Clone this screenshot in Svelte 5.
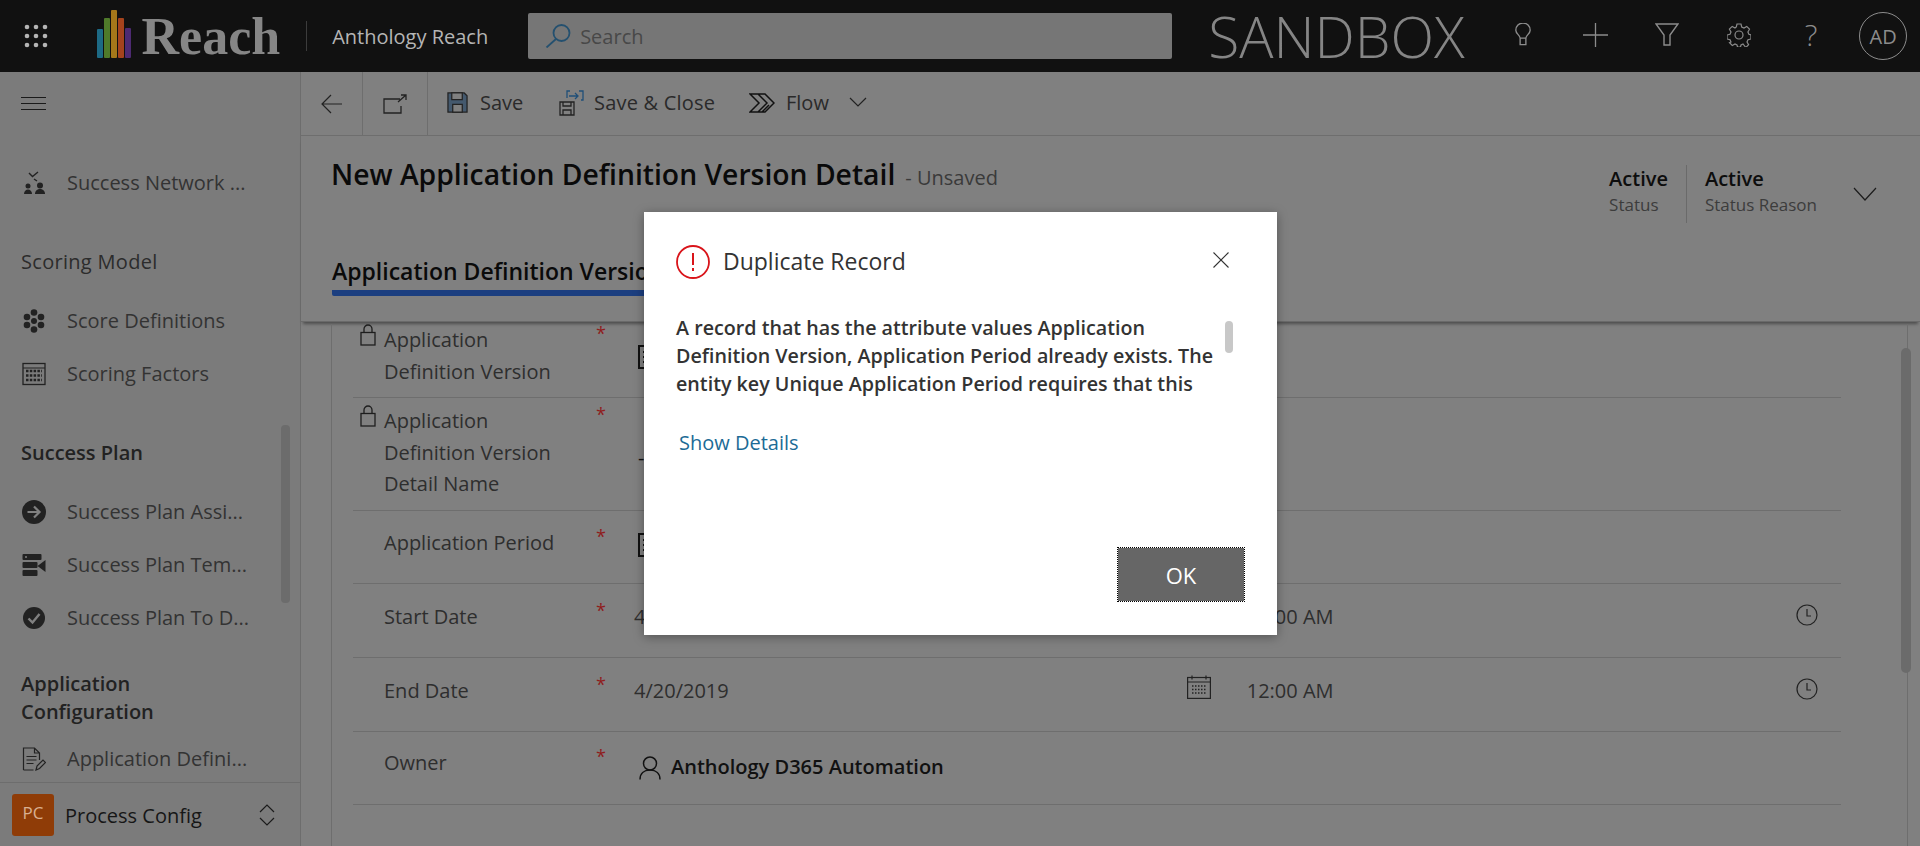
<script>
  const navGroups = [
    { heading: null, items: [{ label: 'Success Network ...', icon: 'network' }] },
    { heading: ['Scoring Model'], light: true, items: [
      { label: 'Score Definitions', icon: 'flower' },
      { label: 'Scoring Factors', icon: 'abacus' }
    ] },
    { heading: ['Success Plan'], items: [
      { label: 'Success Plan Assi...', icon: 'arrow' },
      { label: 'Success Plan Tem...', icon: 'template' },
      { label: 'Success Plan To D...', icon: 'check' }
    ] },
    { heading: ['Application', 'Configuration'], tall: true, items: [
      { label: 'Application Defini...', icon: 'doc' }
    ] }
  ];

  const bars = [
    { h: 29, c: '#1d6a85' },
    { h: 40, c: '#4f7a2a' },
    { h: 48, c: '#a5781a' },
    { h: 40, c: '#a4431d' },
    { h: 30, c: '#4d2a72' }
  ];
</script>

{#snippet navIcon(name)}
  <svg class="nav-icon" viewBox="0 0 24 24" fill="#222" stroke="none">
    {#if name === 'network'}
      <path d="M7 2l3.500 3.500L16 1M12 8l3 2" fill="none" stroke="#222" stroke-width="1.400"/>
      <circle cx="6" cy="15" r="2.500"/><path d="M2 23c0-3 2-4.500 4-4.500s4 1.500 4 4.500z"/>
      <circle cx="18" cy="14.500" r="3"/><path d="M13 23c0-3.500 2.500-5 5-5s5 1.500 5 5z"/>
    {:else if name === 'flower'}
      <circle cx="12" cy="3.500" r="3.300"/><circle cx="5" cy="8" r="3.300"/><circle cx="19" cy="8" r="3.300"/>
      <circle cx="12" cy="12" r="3"/><circle cx="5" cy="16" r="3.300"/><circle cx="19" cy="16" r="3.300"/><circle cx="12" cy="20.500" r="3.300"/>
    {:else if name === 'abacus'}
      <rect x="1" y="1.500" width="22" height="21" fill="none" stroke="#222" stroke-width="1.300"/>
      <path d="M1 6h22" stroke="#222" stroke-width="1"/>
      <path d="M4 9h16M4 13.500h16M4 18h16" stroke="#222" stroke-width="2.600" stroke-dasharray="2.500 1.300" fill="none"/>
    {:else if name === 'arrow'}
      <circle cx="12" cy="12" r="12"/>
      <path d="M5.500 12h11M12 6.500l5.500 5.500-5.500 5.500" fill="none" stroke="#808080" stroke-width="2.200"/>
    {:else if name === 'template'}
      <rect x="0.500" y="1" width="19" height="6" rx="1"/><rect x="0.500" y="9" width="15" height="6" rx="1"/><rect x="0.500" y="17" width="15" height="6" rx="1"/>
      <path d="M23.500 7v12l-8-6z"/>
      <circle cx="4" cy="4" r="1" fill="#808080"/>
    {:else if name === 'check'}
      <circle cx="12" cy="12" r="11"/>
      <path d="M6.500 12.500l4 4 7-8.500" fill="none" stroke="#808080" stroke-width="2.400"/>
    {:else if name === 'doc'}
      <path d="M1.500 23V1h11l5 5v7M1.500 23h10M12.500 1v5h5" fill="none" stroke="#222" stroke-width="1.200"/>
      <path d="M4.500 9.500h10M4.500 13h10M4.500 16.500h7" stroke="#222" stroke-width="1.200"/>
      <path d="M14 23l1-4 6-6 2.500 2.500-6 6z" fill="none" stroke="#222" stroke-width="1.200"/>
    {/if}
  </svg>
{/snippet}

{#snippet lock()}
  <svg class="lock" viewBox="0 0 16 22" fill="none" stroke="#1e1e1e" stroke-width="1.300">
    <rect x="1" y="8.500" width="14" height="12.500"/>
    <path d="M4 8.500V5a4 4 0 0 1 8 0v3.500"/>
  </svg>
{/snippet}

{#snippet calendar()}
  <svg class="calendar" viewBox="0 0 24 24" fill="none" stroke="#222" stroke-width="1.200">
    <rect x="0.600" y="2.500" width="22.800" height="20.900"/>
    <path d="M0.600 7h22.800M5 0.500v4M19 0.500v4"/>
    <path d="M5 11h14M5 14.500h14M5 18h14" stroke-width="1.600" stroke-dasharray="1.500 1.500"/>
  </svg>
{/snippet}

{#snippet clock()}
  <svg class="clock" viewBox="0 0 22 22" fill="none" stroke="#222" stroke-width="1.200">
    <circle cx="11" cy="11" r="10"/>
    <path d="M11 5v7h4"/>
  </svg>
{/snippet}

{#snippet lookup()}
  <svg viewBox="0 0 24 24" width="24" height="24" fill="none" stroke="#111" stroke-width="2">
    <rect x="1" y="1" width="22" height="22"/>
    <path d="M5 7h14M5 12h14M5 17h14" stroke-width="1.800"/>
  </svg>
{/snippet}

<div class="page">
  <header class="topbar">
    <svg class="waffle" viewBox="0 0 24 24" fill="#b4b4b4">
      {#each [3, 12, 21] as y}
        {#each [3, 12, 21] as x}
          <circle cx={x} cy={y} r="2.300"/>
        {/each}
      {/each}
    </svg>
    <div class="logo-bars">
      {#each bars as b}
        <span style="height: {b.h}px; background: {b.c}"></span>
      {/each}
    </div>
    <span class="logo-word">Reach</span>
    <span class="logo-sep"></span>
    <span class="app-name">Anthology Reach</span>
    <div class="search">
      <svg viewBox="0 0 26 24" fill="none" stroke="#24506f" stroke-width="1.800">
        <circle cx="16.500" cy="9" r="8"/>
        <path d="M11 15L1.500 23.500"/>
      </svg>
      <span>Search</span>
    </div>
    <span class="sandbox">SANDBOX</span>
    <div class="top-icons">
      <span class="top-icon">
        <svg width="18" height="23" viewBox="0 0 24 32" fill="none" stroke="#8c8c8c" stroke-width="1.900">
          <path d="M8 21c0-4-6-6-6-11a10 10 0 0 1 20 0c0 5-6 7-6 11zM8 21v9h8v-9"/>
        </svg>
      </span>
      <span class="top-icon">
        <svg width="25" height="24" viewBox="0 0 25 24" fill="none" stroke="#8c8c8c" stroke-width="1.300">
          <path d="M12.500 0v24M0 12h25"/>
        </svg>
      </span>
      <span class="top-icon">
        <svg width="24" height="23" viewBox="0 0 24 23" fill="none" stroke="#8c8c8c" stroke-width="1.400">
          <path d="M1 1h22L15 12v10H9V12z"/>
        </svg>
      </span>
      <span class="top-icon">
        <svg width="24" height="24" viewBox="0 0 24 24" fill="none" stroke="#8c8c8c" stroke-width="1.200">
          <circle cx="12" cy="12" r="4"/>
          <path d="M10 1h4l.7 3 2.300 1 2.700-1.600 2.800 2.800L20.900 9l1 2.300 2.100.7v4l-3 .7-1 2.300 1.600 2.700-2.800 2.800L16 21l-2 1-.5 2h-3l-.5-2-2-1-2.700 1.500-2.800-2.800L4 19l-1-2.300-3-.7v-4l3-.7L4 9 2.400 6.200l2.800-2.800L8 5l1.300-1z"/>
        </svg>
      </span>
      <span class="top-icon help">?</span>
    </div>
    <span class="avatar">AD</span>
  </header>

  <div class="body">
    <aside class="sidebar">
      <div class="hamburger"><span></span><span></span><span></span></div>
      <nav class="nav">
        {#each navGroups as group}
          {#if group.heading}
            <div class="heading" class:light={group.light} class:tall={group.tall}>
              {#each group.heading as line}
                <div>{line}</div>
              {/each}
            </div>
          {/if}
          {#each group.items as item}
            <div class="nav-item">
              {@render navIcon(item.icon)}
              <span>{item.label}</span>
            </div>
          {/each}
        {/each}
      </nav>
      <div class="area">
        <span class="area-badge">PC</span>
        <span class="area-name">Process Config</span>
        <svg viewBox="0 0 16 24" fill="none" stroke="#1c1c1c" stroke-width="1.200">
          <path d="M1 9l7-7 7 7M1 15l7 7 7-7"/>
        </svg>
      </div>
      <div class="side-thumb"></div>
    </aside>

    <main class="main">
      <div class="commandbar">
        <button class="cmd narrow back" aria-label="Back">
          <svg viewBox="0 0 22 20" width="22" height="20" fill="none" stroke="#222" stroke-width="1.200"><path d="M21 10H1M10 1l-9 9 9 9"/></svg>
        </button>
        <button class="cmd narrow pop" aria-label="Open in new window">
          <svg viewBox="0 0 24 20" width="24" height="20" fill="none" stroke="#222" stroke-width="1.300"><path d="M17 5H1v14h17v-7M15 8l8-7M18 1h5v5"/></svg>
        </button>
        <button class="cmd save">
          <svg viewBox="0 0 22 22" width="21" height="21" stroke="#222" stroke-width="1.300"><path d="M1 1h17l3 3v17H1z" fill="#44596e"/><path d="M5 1h11v7H5z" fill="#808080"/><path d="M6 21v-8h10v8z" fill="#808080"/></svg>
          <span>Save</span>
        </button>
        <button class="cmd saveclose">
          <svg viewBox="0 0 25 26" width="25" height="26" fill="none" stroke="#222" stroke-width="1.300"><path d="M1 12h14v13H1zM4 12v4h8v-4M4 25v-5h8v5" /><path d="M8 8V1h3M20 1h4v9h-2M10 6h9M16 3l3 3-3 3" stroke="#1f4f78"/></svg>
          <span>Save &amp; Close</span>
        </button>
        <button class="cmd flow">
          <svg viewBox="0 0 26 20" width="26" height="20" fill="none" stroke="#111" stroke-width="1.500"><path d="M1 1h15l9 9-9 9H1l9-9zM9 1l9 9-9 9M13 19l7-7"/></svg>
          <span>Flow</span>
          <svg class="flow-chev" viewBox="0 0 18 10" width="18" height="10" fill="none" stroke="#222" stroke-width="1.200"><path d="M1 1l8 8 8-8"/></svg>
        </button>
      </div>

      <section class="formhead">
        <div class="titlerow">
          <div class="title">
            <h1>New Application Definition Version Detail</h1>
            <span class="unsaved">- Unsaved</span>
          </div>
          <div class="status">
            <div class="stat first"><b>Active</b><small>Status</small></div>
            <div class="stat"><b>Active</b><small>Status Reason</small></div>
            <svg viewBox="0 0 24 14" width="24" height="14" fill="none" stroke="#1c1c1c" stroke-width="1.200"><path d="M1 1l11 12L23 1"/></svg>
          </div>
        </div>
        <div class="tab">Application Definition Version Detail</div>
      </section>

      <div class="formbody">
        <div class="card">
          <div class="row r1">
            <span class="lockcell">{@render lock()}</span>
            <div class="label"><div>Application</div><div>Definition Version</div></div>
            <span class="star">*</span>
            <div class="value icon-value">{@render lookup()}</div>
          </div>
          <div class="row r2">
            <span class="lockcell">{@render lock()}</span>
            <div class="label"><div>Application</div><div>Definition Version</div><div>Detail Name</div></div>
            <span class="star">*</span>
            <div class="value dash">-</div>
          </div>
          <div class="row r3">
            <span class="lockcell"></span>
            <div class="label"><div>Application Period</div></div>
            <span class="star">*</span>
            <div class="value icon-value r3-icon">{@render lookup()}</div>
          </div>
          <div class="row r4">
            <span class="lockcell"></span>
            <div class="label"><div>Start Date</div></div>
            <span class="star">*</span>
            <div class="value date">
              <span>4/20/2019</span>
              {@render calendar()}
              <span class="time">12:00 AM</span>
              {@render clock()}
            </div>
          </div>
          <div class="row r4">
            <span class="lockcell"></span>
            <div class="label"><div>End Date</div></div>
            <span class="star">*</span>
            <div class="value date">
              <span>4/20/2019</span>
              {@render calendar()}
              <span class="time">12:00 AM</span>
              {@render clock()}
            </div>
          </div>
          <div class="row r6">
            <span class="lockcell"></span>
            <div class="label"><div>Owner</div></div>
            <span class="star">*</span>
            <div class="value owner">
              <svg viewBox="0 0 24 24" width="24" height="25" fill="none" stroke="#111" stroke-width="1.500"><circle cx="12" cy="8" r="6.500"/><path d="M2 24c0-6 4-9.500 10-9.500S22 18 22 24"/></svg>
              <b>Anthology D365 Automation</b>
            </div>
          </div>
        </div>
        <div class="main-thumb"></div>
      </div>
    </main>
  </div>

  <div class="dialog" role="dialog">
    <div class="dlg-head">
      <svg class="dlg-icon" viewBox="0 0 34 34" fill="none" stroke="#d9141a" stroke-width="1.800">
        <circle cx="17" cy="17" r="16"/>
        <path d="M17 8v12M17 23v3" stroke-width="2"/>
      </svg>
      <h2>Duplicate Record</h2>
      <svg class="dlg-close" viewBox="0 0 16 16" fill="none" stroke="#333" stroke-width="1.100">
        <path d="M0.500 0.500l15 15M15.500 0.500l-15 15"/>
      </svg>
    </div>
    <div class="dlg-msg">
      <p>A record that has the attribute values Application Definition Version, Application Period already exists. The entity key Unique Application Period requires that this</p>
      <span class="dlg-thumb"></span>
    </div>
    <span class="dlg-link">Show Details</span>
    <div class="dlg-foot"><button class="ok">OK</button></div>
  </div>
</div>

<style>
  :global(body) {
    margin: 0;
    background: #808080;
  }

  .page {
    position: relative;
    width: 1920px;
    height: 846px;
    overflow: hidden;
    font-family: "Open Sans", "Noto Sans", sans-serif;
    font-stretch: 90%;
    font-size: 20px;
    color: #2a2a2a;
  }

  .topbar {
    height: 72px;
    background: #111;
    display: flex;
    align-items: center;
    box-sizing: border-box;
    padding-left: 24px;
  }
  .waffle {
    width: 24px;
    height: 24px;
    margin-right: 49px;
  }
  .logo-bars {
    display: flex;
    align-items: flex-end;
    gap: 1.500px;
    height: 48px;
    margin-top: -4px;
  }
  .logo-bars span {
    width: 5.500px;
    border-radius: 1px;
  }
  .logo-word {
    font-family: "Liberation Serif", serif;
    font-stretch: normal;
    font-weight: 700;
    font-size: 52px;
    color: #868686;
    margin-left: 11px;
    line-height: 72px;
    margin-top: 2px;
  }
  .logo-sep {
    width: 1px;
    height: 30px;
    background: #3c3c3c;
    margin-left: 26px;
  }
  .app-name {
    color: #b5b5b5;
    margin-left: 25px;
    width: 196px;
    white-space: nowrap;
  }
  .search {
    width: 644px;
    height: 46px;
    background: #767676;
    border-radius: 2px;
    display: flex;
    align-items: center;
    color: #484848;
    box-sizing: border-box;
    padding-left: 17px;
  }
  .search svg {
    width: 26px;
    height: 24px;
    margin-right: 9px;
  }
  .sandbox {
    font-weight: 300;
    font-size: 57px;
    line-height: 60px;
    color: #858585;
    margin-left: 36px;
    width: 279px;
    flex: none;
    white-space: nowrap;
  }
  .top-icons {
    display: flex;
    align-items: center;
    flex: none;
    margin-top: -3px;
  }
  .top-icon {
    width: 72px;
    height: 40px;
    display: flex;
    align-items: center;
    justify-content: center;
  }
  .help {
    color: #8c8c8c;
    font-weight: 300;
    font-size: 30px;
  }
  .avatar {
    width: 48px;
    height: 48px;
    box-sizing: border-box;
    border: 1px solid #8c8c8c;
    border-radius: 50%;
    display: flex;
    align-items: center;
    justify-content: center;
    color: #8c8c8c;
    font-size: 20px;
    flex: none;
    margin-left: 12px;
  }

  .body {
    display: flex;
    height: 774px;
  }

  .sidebar {
    position: relative;
    width: 300px;
    flex: none;
    background: #7b7b7b;
    border-right: 1px solid #6d6d6d;
    box-sizing: content-box;
    display: flex;
    flex-direction: column;
  }
  .hamburger {
    height: 63px;
    display: flex;
    flex-direction: column;
    justify-content: center;
    gap: 5px;
    padding-left: 21px;
    flex: none;
  }
  .hamburger span {
    display: block;
    width: 25px;
    height: 1px;
    background: #1a1a1a;
  }
  .nav {
    flex: 1;
    overflow: hidden;
    padding-top: 21px;
    min-height: 0;
  }
  .nav-item {
    height: 53px;
    display: flex;
    align-items: center;
    padding-left: 22px;
    color: #333;
    white-space: nowrap;
  }
  .nav-icon {
    width: 24px;
    height: 24px;
    margin-right: 21px;
    flex: none;
  }
  .heading {
    padding: 36px 21px 15px;
    line-height: 34px;
    font-weight: 600;
    color: #222;
  }
  .heading.light {
    font-weight: 500;
    letter-spacing: .3px;
    color: #2c2c2c;
  }
  .heading.tall {
    padding: 26px 21px 6px;
    line-height: 28px;
  }
  .area {
    height: 64px;
    flex: none;
    box-sizing: border-box;
    border-top: 1px solid #6d6d6d;
    display: flex;
    align-items: center;
    padding-left: 12px;
    font-weight: 500;
    color: #161616;
  }
  .area svg {
    width: 16px;
    height: 24px;
    margin-left: 17px;
  }
  .area-badge {
    width: 42px;
    height: 42px;
    background: #8f3c07;
    border-radius: 3px;
    color: #d9b090;
    font-size: 17px;
    font-weight: 400;
    display: flex;
    align-items: center;
    justify-content: center;
    margin-right: 11px;
    padding-bottom: 4px;
    box-sizing: border-box;
  }
  .area-name {
    width: 177px;
    white-space: nowrap;
    padding-top: 2px;
  }
  .side-thumb {
    position: absolute;
    left: 281px;
    top: 353px;
    width: 9px;
    height: 178px;
    background: #6c6c6c;
    border-radius: 4px;
  }

  .main {
    flex: 1;
    min-width: 0;
    display: flex;
    flex-direction: column;
    background: #808080;
  }
  .commandbar {
    height: 63px;
    border-bottom: 1px solid #6e6e6e;
    display: flex;
    flex: none;
  }
  .cmd {
    all: unset;
    display: flex;
    align-items: center;
    color: #2a2a2a;
    font-size: 20px;
    white-space: nowrap;
    height: 61px;
    box-sizing: border-box;
  }
  .cmd.narrow {
    justify-content: center;
    height: 63px;
    border-right: 1px solid #6e6e6e;
  }
  .back { width: 62px; }
  .pop { width: 65px; }
  .save { margin-left: 19px; gap: 12px; width: 112px; }
  .saveclose { gap: 10px; width: 190px; letter-spacing: .2px; }
  .flow { gap: 11px; }
  .flow-chev { margin-left: 9px; margin-top: -2px; }

  .formhead {
    height: 186px;
    flex: none;
    box-sizing: border-box;
    padding: 0 30px;
    box-shadow: 0 4px 3px -2px rgba(0, 0, 0, .4);
    border-bottom: 1px solid #6a6a6a;
    position: relative;
    display: flex;
    flex-direction: column;
  }
  .titlerow {
    display: flex;
    justify-content: space-between;
    height: 120px;
    flex: none;
  }
  .title {
    display: flex;
    align-items: baseline;
    padding-top: 19px;
    gap: 10px;
  }
  .title h1 {
    margin: 0;
    font-size: 28.300px;
    font-weight: 600;
    color: #0a0a0a;
    white-space: nowrap;
  }
  .unsaved {
    color: #3a3a3a;
    font-size: 20px;
  }
  .status {
    display: flex;
    align-items: flex-start;
    padding-top: 29px;
  }
  .status svg {
    margin: 22px 13px 0 36px;
  }
  .stat {
    display: flex;
    flex-direction: column;
    height: 58px;
    line-height: 28px;
  }
  .stat.first {
    border-right: 1px solid #6a6a6a;
    padding-right: 18px;
    margin-right: 18px;
  }
  .stat b {
    font-weight: 600;
    color: #0d0d0d;
    font-size: 20px;
  }
  .stat small {
    font-size: 17px;
    line-height: 24px;
    color: #3c3c3c;
  }
  .tab {
    align-self: flex-start;
    font-size: 23px;
    font-weight: 600;
    color: #0a0a0a;
    padding-bottom: 3px;
    border-bottom: 6px solid #1c3f80;
    white-space: nowrap;
    line-height: 32px;
    margin: -1px 0 0 1px;
    border-radius: 0 0 2px 2px;
  }

  .formbody {
    position: relative;
    flex: 1;
    min-height: 0;
    padding-left: 30px;
  }
  .card {
    width: 1532px;
    height: 100%;
    border-left: 1px solid #6e6e6e;
    border-right: 1px solid #6e6e6e;
    padding: 0 22px 0 21px;
    box-sizing: content-box;
    margin-top: 5px;
  }
  .row {
    display: grid;
    grid-template-columns: 31px 212px 38px 1fr;
    border-bottom: 1px solid #6e6e6e;
    box-sizing: border-box;
    width: 1488px;
    line-height: 32px;
    color: #2e2e2e;
  }
  .label { line-height: 31.500px; }
  .r1 { height: 74px; margin-top: -3px; }
  .r2 { height: 113px; padding-top: 7px; }
  .r3 { height: 73px; padding-top: 16px; }
  .r4 { height: 74px; padding-top: 17px; }
  .r6 { height: 73px; padding-top: 15px; }
  .lockcell { padding-left: 7px; }
  .lock {
    width: 16px;
    height: 22px;
    display: block;
  }
  .star {
    color: #8f1c1c;
    font-size: 18px;
    line-height: 18px;
  }
  .value { white-space: nowrap; }
  .icon-value { padding: 21px 0 0 4px; }
  .r3-icon { padding-top: 6px; }
  .dash { padding: 37px 0 0 4px; color: #111; }
  .date {
    display: flex;
    align-items: flex-start;
  }
  .calendar {
    width: 24px;
    height: 24px;
    margin: 0 0 0 458px;
    flex: none;
  }
  .time { margin-left: 36px; }
  .clock {
    width: 22px;
    height: 22px;
    margin: 3px 0 0 462px;
    flex: none;
  }
  .owner {
    display: flex;
    align-items: center;
    gap: 9px;
    color: #111;
    height: 32px;
    padding: 4px 0 0 4px;
  }
  .owner b { font-weight: 600; }
  .main-thumb {
    position: absolute;
    right: 9px;
    top: 26px;
    width: 10px;
    height: 325px;
    background: #6b6b6b;
    border-radius: 5px;
  }

  .dialog {
    position: absolute;
    left: 644px;
    top: 212px;
    width: 633px;
    height: 423px;
    background: #fff;
    box-shadow: 0 2px 10px rgba(0, 0, 0, .35);
    box-sizing: border-box;
    padding: 0 32px;
    display: flex;
    flex-direction: column;
  }
  .dlg-head {
    height: 83px;
    display: flex;
    align-items: center;
    flex: none;
  }
  .dlg-icon {
    width: 34px;
    height: 34px;
    margin-right: 13px;
    margin-top: 17px;
  }
  .dlg-head h2 {
    margin: 15px 0 0;
    flex: 1;
    font-weight: 400;
    font-size: 23px;
    color: #333;
  }
  .dlg-close {
    width: 16px;
    height: 16px;
    margin: 13px 16px 0 0;
  }
  .dlg-msg {
    display: flex;
    height: 102px;
    padding-top: 19px;
    box-sizing: border-box;
    flex: none;
  }
  .dlg-msg p {
    margin: 0;
    width: 548px;
    font-weight: 600;
    font-size: 19.700px;
    line-height: 28px;
    color: #333;
  }
  .dlg-thumb {
    width: 8px;
    height: 32px;
    background: #c8c8c8;
    border-radius: 4px;
    margin: 7px 0 0 1px;
  }
  .dlg-link {
    color: #1c6b96;
    margin: 30px 0 0 3px;
    line-height: 32px;
    height: 32px;
  }
  .dlg-foot {
    flex: 1;
    display: flex;
    justify-content: flex-end;
    align-items: flex-end;
    padding-bottom: 33px;
  }
  .ok {
    all: unset;
    width: 128px;
    height: 55px;
    box-sizing: border-box;
    background: #666;
    background-clip: padding-box;
    border: 1px dotted #000;
    color: #fff;
    font-size: 22px;
    display: flex;
    align-items: center;
    justify-content: center;
  }
</style>
